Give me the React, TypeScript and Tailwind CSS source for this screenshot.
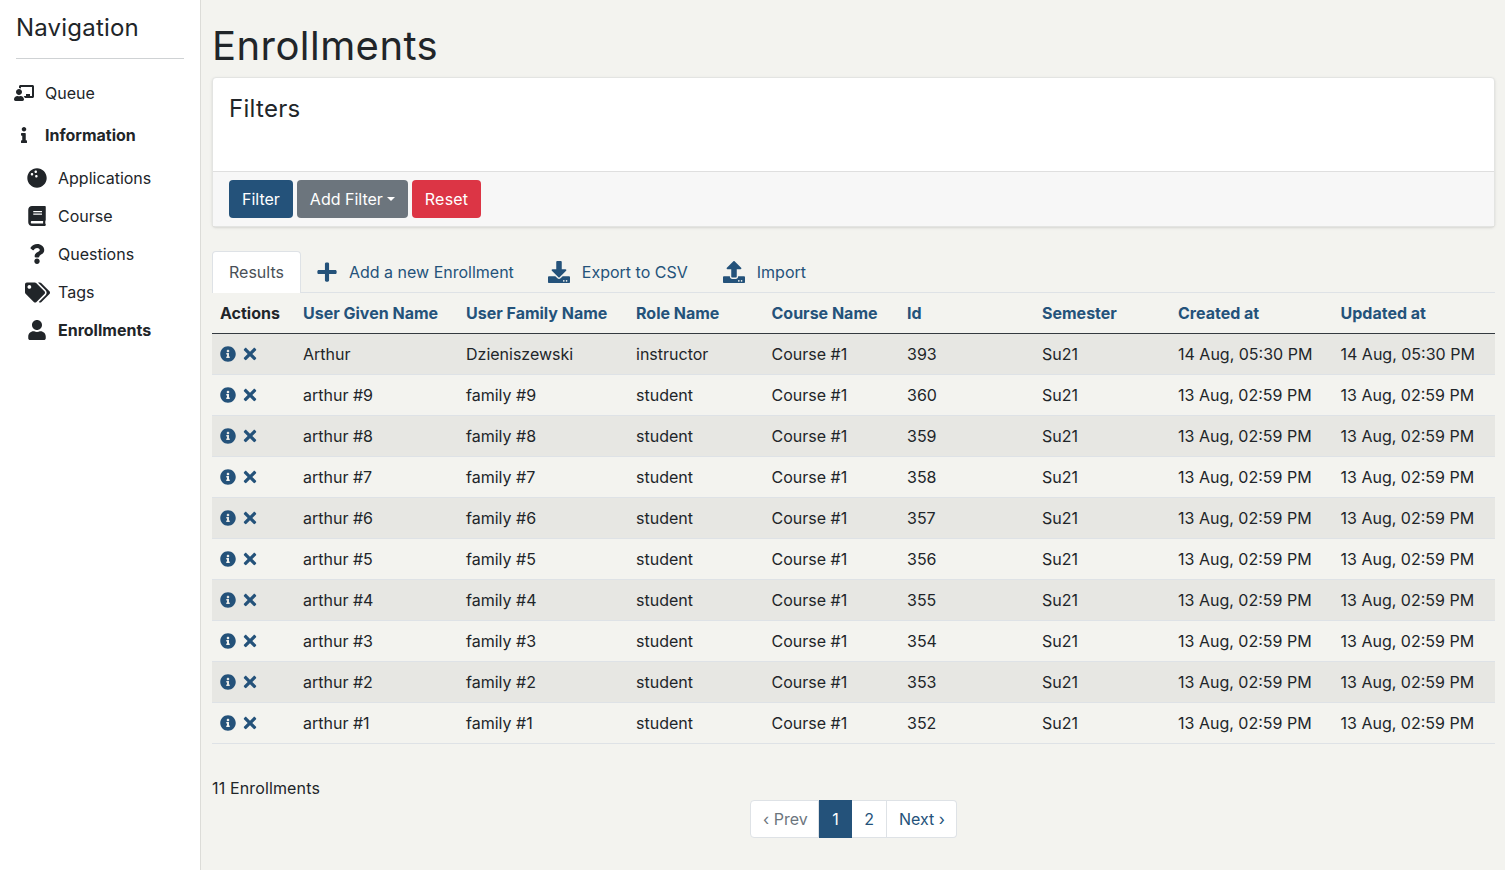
import { FaBook, FaBowlingBall, FaChalkboardTeacher, FaDownload, FaInfo, FaInfoCircle, FaPlus, FaQuestion, FaTags, FaTimes, FaUpload, FaUser } from "react-icons/fa";

const columns = ["User Given Name", "User Family Name", "Role Name", "Course Name", "Id", "Semester", "Created at", "Updated at"];

const rows = [
  ["Arthur", "Dzieniszewski", "instructor", "393", "14 Aug, 05:30 PM"],
  ["arthur #9", "family #9", "student", "360", "13 Aug, 02:59 PM"],
  ["arthur #8", "family #8", "student", "359", "13 Aug, 02:59 PM"],
  ["arthur #7", "family #7", "student", "358", "13 Aug, 02:59 PM"],
  ["arthur #6", "family #6", "student", "357", "13 Aug, 02:59 PM"],
  ["arthur #5", "family #5", "student", "356", "13 Aug, 02:59 PM"],
  ["arthur #4", "family #4", "student", "355", "13 Aug, 02:59 PM"],
  ["arthur #3", "family #3", "student", "354", "13 Aug, 02:59 PM"],
  ["arthur #2", "family #2", "student", "353", "13 Aug, 02:59 PM"],
  ["arthur #1", "family #1", "student", "352", "13 Aug, 02:59 PM"],
];

function NavItem({ icon, label, bold, sub }: { icon: React.ReactNode; label: string; bold?: boolean; sub?: boolean }) {
  return (
    <div className={`flex items-center ${sub ? "h-[38px] pl-[24px]" : "h-[42px] pl-[14px]"} ${bold ? "font-bold" : ""}`}>
      <span className={`flex ${sub ? "w-[26px]" : "w-[20px]"} justify-center`}>{icon}</span>
      <span className={sub ? "ml-[8px]" : "ml-[11px]"}>{label}</span>
    </div>
  );
}

function TabLink({ icon, label, className }: { icon: React.ReactNode; label: string; className?: string }) {
  return (
    <div className={`flex items-center gap-[12px] px-[17px] text-[#24527a] ${className ?? ""}`}>
      {icon}
      <span>{label}</span>
    </div>
  );
}

export default function App() {
  return (
    <div className="flex min-h-[870px] bg-[#f3f3ef] font-['Inter',sans-serif] text-base leading-6 text-[#212529]">
      <aside className="w-[201px] shrink-0 border-r border-[#dcdcd8] bg-white">
        <div className="mx-[16px] h-[59px] border-b border-[#cfd2d4] pt-[12px] text-2xl leading-[32px] tracking-[0.2px]">Navigation</div>
        <nav className="mt-[13px]">
          <NavItem icon={<FaChalkboardTeacher size={20} />} label="Queue" />
          <NavItem icon={<FaInfo size={16} />} label="Information" bold />
          <div className="h-[3px]" />
          <NavItem sub icon={<FaBowlingBall size={20} />} label="Applications" />
          <NavItem sub icon={<FaBook size={20} />} label="Course" />
          <NavItem sub icon={<FaQuestion size={20} />} label="Questions" />
          <NavItem sub icon={<FaTags size={25} />} label="Tags" />
          <NavItem sub icon={<FaUser size={20} />} label="Enrollments" bold />
        </nav>
      </aside>
      <main className="min-w-0 flex-1 pl-[11px] pr-[10px]">
        <h1 className="pt-[22px] text-[40px] leading-[48px] font-normal tracking-[0.45px]">Enrollments</h1>
        <section className="mt-[7px] rounded border border-[#e3e4e2] bg-white shadow-sm">
          <div className="h-[93px] px-[16px] pt-[15px] text-2xl leading-[32px] tracking-[0.28px]">Filters</div>
          <div className="flex h-[55px] gap-[4px] border-t border-[#dfdfdf] bg-[#f7f7f7] px-[16px] pt-[8px] text-white">
            <button className="h-[38px] rounded bg-[#24527a] px-[13px]">Filter</button>
            <button className="flex h-[38px] items-center rounded bg-[#6c757d] px-[13px]">
              Add Filter
              <span className="ml-[4px] border-x-[4.5px] border-t-[4.5px] border-x-transparent border-t-white" />
            </button>
            <button className="h-[38px] rounded bg-[#dc3545] px-[13px] tracking-[0.2px]">Reset</button>
          </div>
        </section>
        <div className="mt-[24px] flex h-[42px] border-b border-[#dee2e6]">
          <div className="h-[42px] rounded-t border border-b-0 border-[#dee2e6] bg-white px-[16px] pt-[8px] text-[#495057]">Results</div>
          <TabLink icon={<FaPlus size={22} className="-mr-[1px] -ml-[2px]" />} label="Add a new Enrollment" />
          <TabLink icon={<FaDownload size={22} />} label="Export to CSV" className="pr-[18px]" />
          <TabLink icon={<FaUpload size={22} />} label="Import" />
        </div>
        <table className="w-[1283px] table-fixed border-collapse">
          <colgroup>
            <col className="w-[83px]" />
            <col className="w-[163px]" />
            <col className="w-[170px]" />
            <col className="w-[135.5px]" />
            <col className="w-[135.5px]" />
            <col className="w-[135px]" />
            <col className="w-[136px]" />
            <col className="w-[162.5px]" />
            <col className="w-[162.5px]" />
          </colgroup>
          <thead>
            <tr className="h-[40px] border-b border-[#343a40] text-left">
              <th className="px-[8px] font-bold">Actions</th>
              {columns.map((c) => (
                <th key={c} className="px-[8px] font-bold whitespace-nowrap text-[#24527a]">
                  {c}
                </th>
              ))}
            </tr>
          </thead>
          <tbody>
            {rows.map((r, i) => (
              <tr key={r[3]} className={`h-[41px] border-b border-[#dee2e6] ${i % 2 === 0 ? "bg-[#e7e7e3]" : ""}`}>
                <td className="px-[8px]">
                  <div className="flex items-center gap-[5px] text-[#24527a]">
                    <FaInfoCircle size={16} />
                    <FaTimes size={18} />
                  </div>
                </td>
                <td className="px-[8px]">{r[0]}</td>
                <td className="px-[8px]">{r[1]}</td>
                <td className="px-[8px]">{r[2]}</td>
                <td className="px-[8px]">Course #1</td>
                <td className="px-[8px]">{r[3]}</td>
                <td className="px-[8px]">Su21</td>
                <td className="px-[8px] whitespace-nowrap">{r[4]}</td>
                <td className="px-[8px] whitespace-nowrap">{r[4]}</td>
              </tr>
            ))}
          </tbody>
        </table>
        <div className="mt-[32px] tracking-[0.14px]">11 Enrollments</div>
        <div className="flex justify-center">
          <div className="flex h-[38px]">
            <span className="rounded-l border border-[#dee2e6] bg-white pt-[6px] pr-[10px] pl-[12px] text-[#6c757d]">‹ Prev</span>
            <span className="border border-[#24527a] bg-[#24527a] px-[12.5px] pt-[6px] text-white">1</span>
            <span className="border-y border-r border-[#dee2e6] bg-white px-[12px] pt-[6px] text-[#24527a]">2</span>
            <span className="rounded-r border-y border-r border-[#dee2e6] bg-white pt-[6px] pr-[11px] pl-[12px] text-[#24527a]">Next ›</span>
          </div>
        </div>
      </main>
    </div>
  );
}
